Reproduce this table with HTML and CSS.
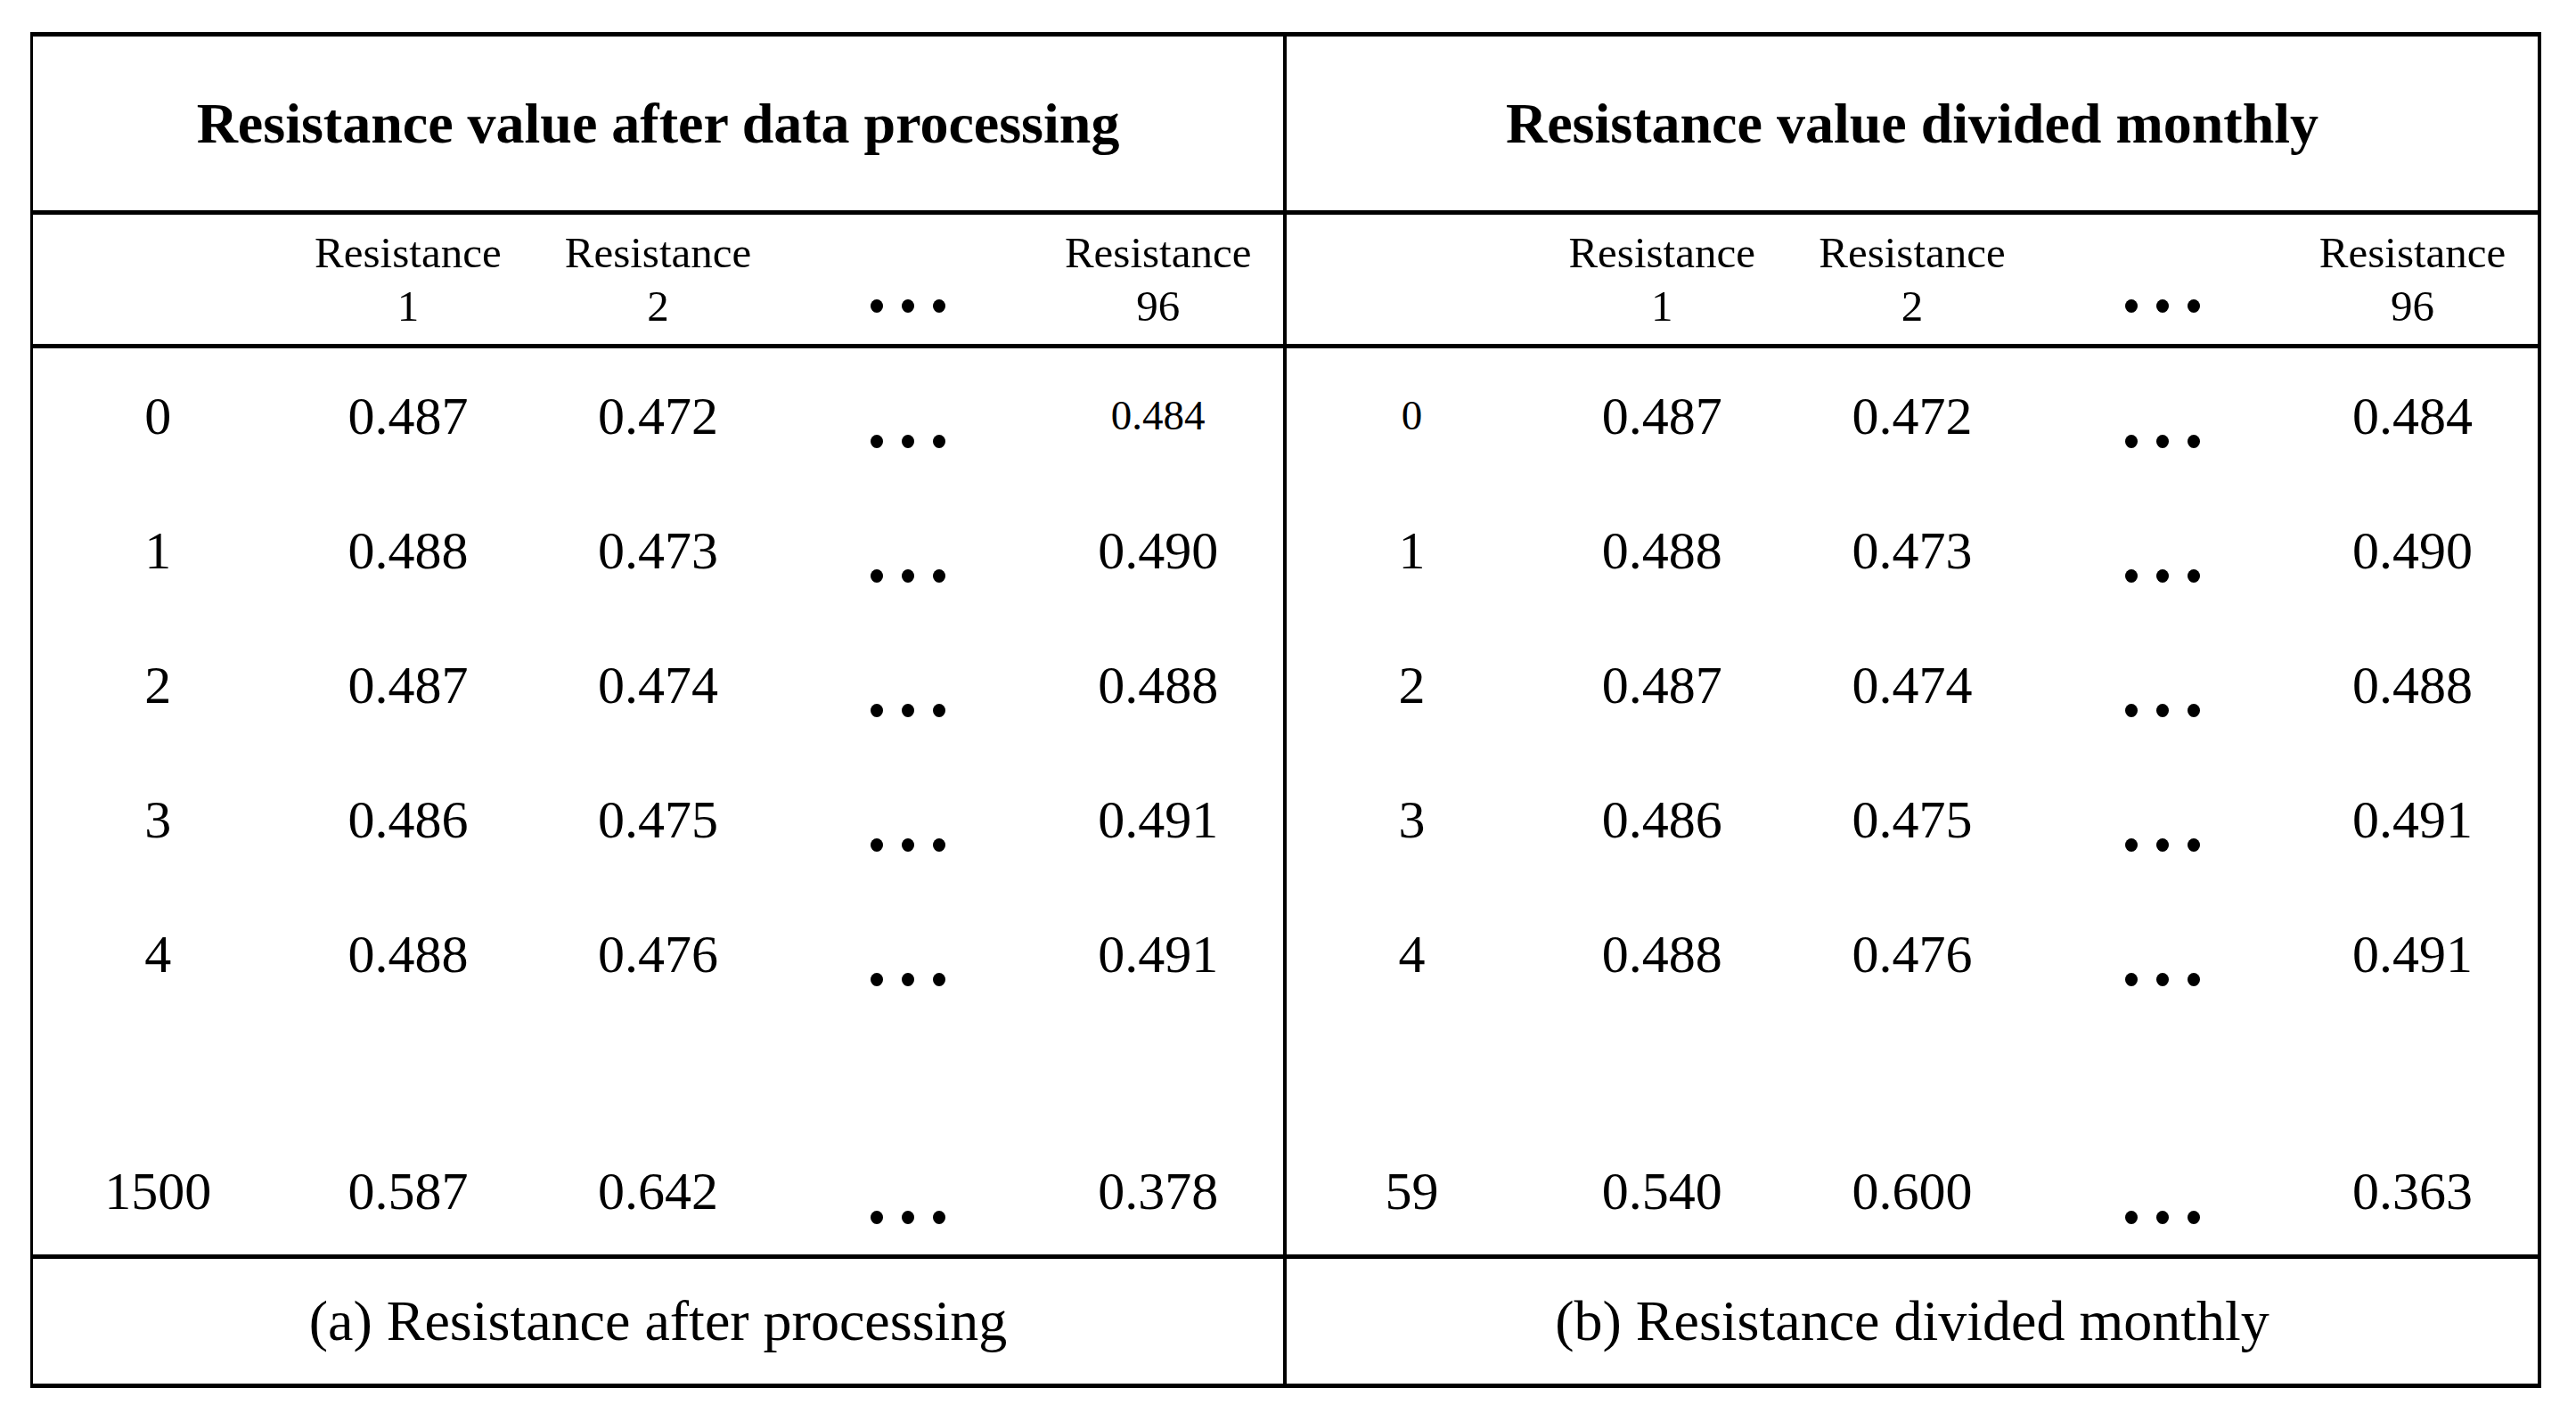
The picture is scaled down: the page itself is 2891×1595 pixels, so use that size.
FILE: index.html
```html
<!DOCTYPE html>
<html lang="en">
<head>
<meta charset="utf-8">
<title>Resistance tables</title>
<link rel="stylesheet" href="styles.css">
</head>
<body>
<div class="table">
  <div class="band head">
    <div class="half">Resistance value after data processing</div>
    <div class="half">Resistance value divided monthly</div>
  </div>
  <div class="band sub">
    <div class="half">
      <div></div>
      <div>Resistance<br>1</div>
      <div>Resistance<br>2</div>
      <div class="dots" aria-label="..."><i></i><i></i><i></i></div>
      <div>Resistance<br>96</div>
    </div>
    <div class="half">
      <div></div>
      <div>Resistance<br>1</div>
      <div>Resistance<br>2</div>
      <div class="dots" aria-label="..."><i></i><i></i><i></i></div>
      <div>Resistance<br>96</div>
    </div>
  </div>
  <div class="band data">
    <div class="half">
      <div class="row"><div>0</div><div>0.487</div><div>0.472</div><div class="dots"><i></i><i></i><i></i></div><div class="small">0.484</div></div>
      <div class="row"><div>1</div><div>0.488</div><div>0.473</div><div class="dots"><i></i><i></i><i></i></div><div>0.490</div></div>
      <div class="row"><div>2</div><div>0.487</div><div>0.474</div><div class="dots"><i></i><i></i><i></i></div><div>0.488</div></div>
      <div class="row"><div>3</div><div>0.486</div><div>0.475</div><div class="dots"><i></i><i></i><i></i></div><div>0.491</div></div>
      <div class="row"><div>4</div><div>0.488</div><div>0.476</div><div class="dots"><i></i><i></i><i></i></div><div>0.491</div></div>
      <div class="row last"><div>1500</div><div>0.587</div><div>0.642</div><div class="dots"><i></i><i></i><i></i></div><div>0.378</div></div>
    </div>
    <div class="half">
      <div class="row"><div class="small">0</div><div>0.487</div><div>0.472</div><div class="dots"><i></i><i></i><i></i></div><div>0.484</div></div>
      <div class="row"><div>1</div><div>0.488</div><div>0.473</div><div class="dots"><i></i><i></i><i></i></div><div>0.490</div></div>
      <div class="row"><div>2</div><div>0.487</div><div>0.474</div><div class="dots"><i></i><i></i><i></i></div><div>0.488</div></div>
      <div class="row"><div>3</div><div>0.486</div><div>0.475</div><div class="dots"><i></i><i></i><i></i></div><div>0.491</div></div>
      <div class="row"><div>4</div><div>0.488</div><div>0.476</div><div class="dots"><i></i><i></i><i></i></div><div>0.491</div></div>
      <div class="row last"><div>59</div><div>0.540</div><div>0.600</div><div class="dots"><i></i><i></i><i></i></div><div>0.363</div></div>
    </div>
  </div>
  <div class="band foot">
    <div class="half">(a) Resistance after processing</div>
    <div class="half">(b) Resistance divided monthly</div>
  </div>
</div>
</body>
</html>
```
FILE: styles.css
```css
html, body {
  margin: 0;
  padding: 0;
  background: #fff;
}
body {
  font-family: "Liberation Serif", "Times New Roman", serif;
  color: #000;
}
.table {
  margin: 36px 0 0 34px;
  width: 2811px;
  border-top: 5px solid #000;
  border-bottom: 5px solid #000;
  border-left: 3px solid #000;
  border-right: 4px solid #000;
}
.band {
  display: grid;
  grid-template-columns: 1407px 1404px;
}
.band + .band {
  border-top: 5px solid #000;
}
.half {
  box-sizing: border-box;
  min-width: 0;
}
.band > .half:first-child {
  border-right: 4px solid #000;
}
.head {
  height: 195px;
}
.head .half {
  display: flex;
  align-items: center;
  justify-content: center;
  font-weight: bold;
  font-size: 64px;
  line-height: 1;
}
.sub {
  height: 145px;
}
.sub .half {
  display: grid;
  grid-template-columns: repeat(5, 1fr);
  align-items: center;
  text-align: center;
  font-size: 49px;
  line-height: 60px;
}
.sub .dots {
  margin-top: 60px;
}
.data {
  height: 1017px;
}
.data .half {
  display: flex;
  flex-direction: column;
}
.row {
  display: grid;
  grid-template-columns: repeat(5, 1fr);
  align-items: center;
  text-align: center;
  height: 151px;
  font-size: 60px;
  line-height: 1;
}
.row.last {
  margin-top: 120px;
  height: 142px;
}
.small {
  font-size: 47px;
}
.dots {
  display: flex;
  justify-content: center;
  gap: 21px;
  margin-top: 58px;
}
.dots i {
  display: block;
  width: 14px;
  height: 15px;
  border-radius: 50%;
  background: #000;
}
.foot {
  height: 140px;
}
.foot .half {
  display: flex;
  align-items: center;
  justify-content: center;
  font-size: 64px;
  line-height: 1;
}
```
